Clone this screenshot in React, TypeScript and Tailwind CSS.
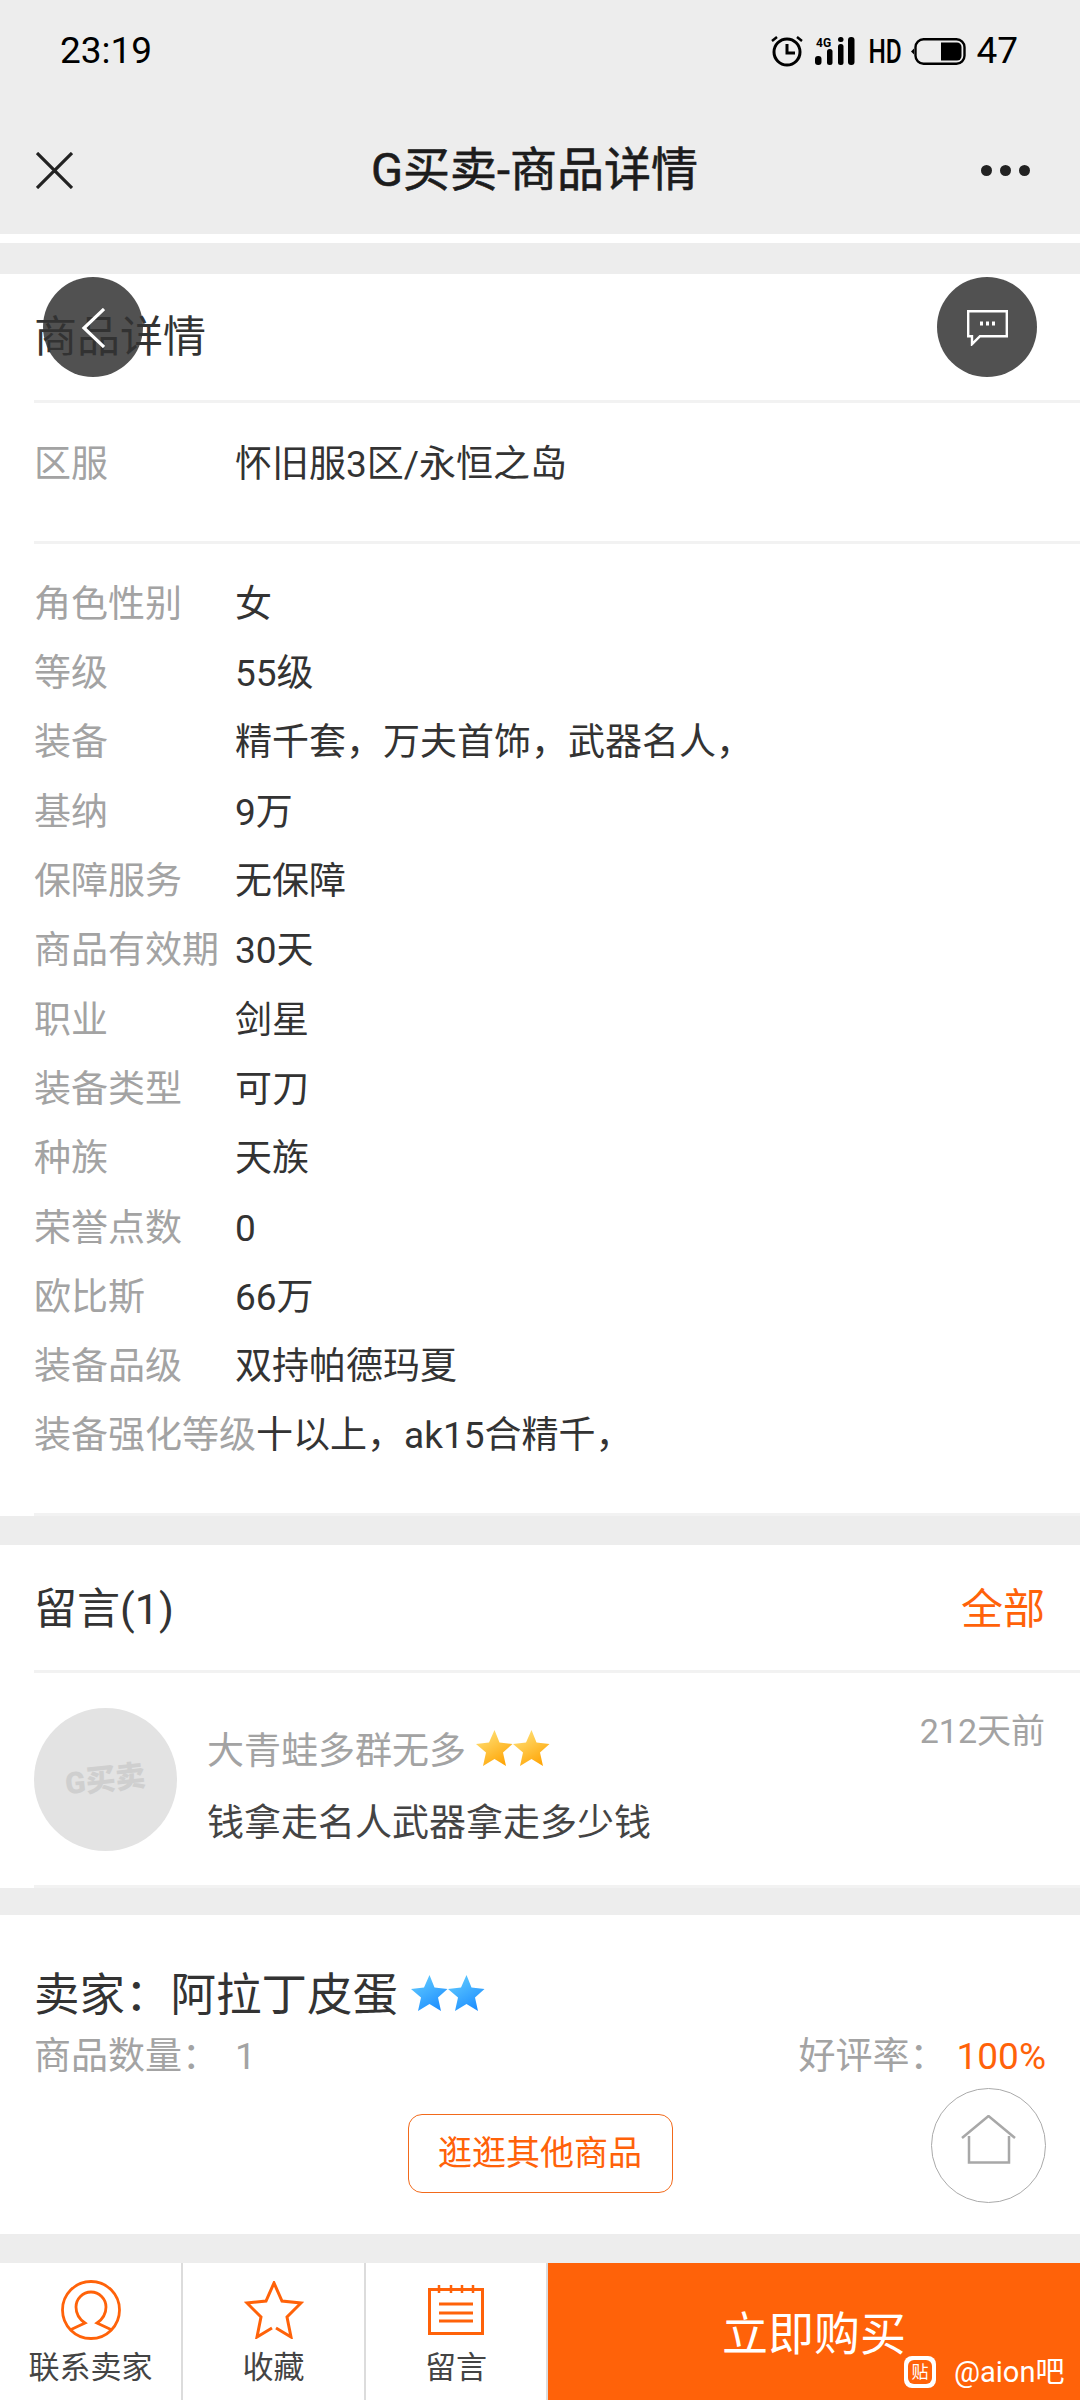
import type { ReactNode } from "react"

const FONT = "font-['Roboto','Noto_Sans_CJK_SC',sans-serif]"

const SPECS = [
  ["角色性别", "女"],
  ["等级", "55级"],
  ["装备", "精千套，万夫首饰，武器名人，"],
  ["基纳", "9万"],
  ["保障服务", "无保障"],
  ["商品有效期", "30天"],
  ["职业", "剑星"],
  ["装备类型", "可刀"],
  ["种族", "天族"],
  ["荣誉点数", "0"],
  ["欧比斯", "66万"],
  ["装备品级", "双持帕德玛夏"],
  ["装备强化等级", "十以上，ak15合精千，"],
]

function StatusBar() {
  return (
    <div className="flex h-[102px] items-center justify-between pl-[60px] pr-[62px] text-[37px] text-black">
      <span>23:19</span>
      <div className="flex items-center">
        <svg width="32" height="32" viewBox="0 0 32 32" fill="none" stroke="#000" strokeWidth="3">
          <circle cx="16" cy="17" r="13" />
          <path d="M16 9v9h8" />
          <path d="M1 6l5-4M31 6l-5-4" strokeWidth="2.5" />
        </svg>
        <svg className="ml-[12px]" width="40" height="30" viewBox="0 0 40 30" fill="#000">
          <text x="1" y="11" fontSize="12" fontWeight="700" fontFamily="Roboto">4G</text>
          <rect x="0" y="20" width="6.5" height="9" rx="3" />
          <rect x="12" y="13" width="5.5" height="16" rx="2.5" />
          <rect x="23" y="8" width="5.5" height="21" rx="2.5" />
          <rect x="23" y="1" width="5.5" height="5" rx="2.5" />
          <rect x="33" y="1" width="6.5" height="28" rx="3" />
        </svg>
        <span className="ml-[14px] flex w-[32px] justify-center">
          <span className="scale-x-[0.72] whitespace-nowrap text-[34px] font-medium leading-none">HD</span>
        </span>
        <svg className="ml-[10px]" width="55" height="27" viewBox="0 0 55 27" fill="none">
          <path d="M0 13.5l3-3v6z" fill="#000" />
          <rect x="4.5" y="1.2" width="49" height="24.6" rx="8" stroke="#000" strokeWidth="2.4" />
          <path d="M30 4.5h16a4.5 4.5 0 0 1 4.5 4.5v9a4.5 4.5 0 0 1-4.5 4.5H30z" fill="#000" />
        </svg>
        <span className="ml-[10px]">47</span>
      </div>
    </div>
  )
}

function NavBar() {
  return (
    <div className="flex h-[132px] items-center justify-between pl-[36px] pr-[50px] pt-[4px]">
      <svg width="37" height="37" viewBox="0 0 37 37" stroke="#222" strokeWidth="3.2">
        <path d="M1 1l35 35M36 1L1 36" />
      </svg>
      <span className="ml-[15px] text-[47px] text-[#1c1c1c] [-webkit-text-stroke:0.6px_#1c1c1c]">G买卖-商品详情</span>
      <div className="flex gap-[8px]">
        <i className="h-[11px] w-[11px] rounded-full bg-[#222]" />
        <i className="h-[11px] w-[11px] rounded-full bg-[#222]" />
        <i className="h-[11px] w-[11px] rounded-full bg-[#222]" />
      </div>
    </div>
  )
}

function Row({ label, value }: { label: string; value: string }) {
  return (
    <div className="flex h-[69.3px] items-center whitespace-nowrap text-[37px]">
      <span className="min-w-[201px] text-[#a3a3a3]">{label}</span>
      <span className="text-[#333]">{value}</span>
    </div>
  )
}

function Star({ from, to, id }: { from: string; to: string; id: string }) {
  return (
    <svg width="37" height="36" viewBox="0 0 37 36">
      <defs>
        <linearGradient id={id} x1="0.2" y1="0" x2="0.8" y2="1">
          <stop offset="0" stopColor={from} />
          <stop offset="1" stopColor={to} />
        </linearGradient>
      </defs>
      <path d="M18.5 0l5 12.5 13 1.5-9.5 8.5 3 13.5-11.5-7-11.5 7 3-13.5L0 14l13-1.5z" fill={`url(#${id})`} />
    </svg>
  )
}

function TabItem({ label, width, children }: { label: string; width: string; children: ReactNode }) {
  return (
    <div className={`flex flex-col items-center border-r-[2px] border-[#dcdcdc] pt-[17px] ${width}`}>
      <div className="flex h-[60px] items-center">{children}</div>
      <span className="mt-[8px] text-[31px] leading-[40px] text-[#444]">{label}</span>
    </div>
  )
}

export default function App() {
  return (
    <div className={`relative h-[2400px] w-[1080px] overflow-hidden bg-[#ededed] ${FONT}`}>
      <StatusBar />
      <NavBar />
      <div className="h-[9px] bg-white" />
      <div className="h-[31px]" />

      <section className="bg-white pl-[34px]">
        <div className="flex h-[129px] items-center border-b-[3px] border-[#f2f2f2] text-[43px] text-[#333]">
          商品详情
        </div>
        <div className="flex h-[141px] items-start border-b-[3px] border-[#f2f2f2] pt-[34px] text-[37px]">
          <span className="w-[201px] text-[#a3a3a3]">区服</span>
          <span className="text-[#333]">怀旧服3区/永恒之岛</span>
        </div>
        <div className="border-b-[3px] border-[#f2f2f2] pb-[42px] pt-[26px]">
          <div className="h-[901px]">
            {SPECS.map(([label, value]) => (
              <Row key={label} label={label} value={value} />
            ))}
          </div>
        </div>
      </section>

      <div className="h-[29px]" />

      <section className="bg-white pl-[34px]">
        <div className="flex h-[128px] items-center justify-between border-b-[3px] border-[#f2f2f2] pr-[35px] pt-[3px] text-[43px]">
          <span className="text-[#333]">留言(1)</span>
          <span className="text-[42px] text-[#ff6209]">全部</span>
        </div>
        <div className="flex h-[215px] items-start border-b-[3px] border-[#f2f2f2] pr-[35px] pt-[35px]">
          <div className="flex h-[143px] w-[143px] shrink-0 items-center justify-center rounded-full bg-[#e3e3e3]">
            <span className="-rotate-6 whitespace-nowrap text-[30px] font-black text-[#cfcfcf]">G买卖</span>
          </div>
          <div className="ml-[30px] flex-1">
            <div className="mt-[16px] flex items-center gap-[10px] text-[37px] text-[#a3a3a3]">
              大青蛙多群无多
              <span className="-mt-[8px] flex">
                <Star id="gold1" from="#ffe27a" to="#ffa200" />
                <Star id="gold2" from="#ffe27a" to="#ffa200" />
              </span>
            </div>
            <div className="mt-[16px] text-[37px] text-[#444]">钱拿走名人武器拿走多少钱</div>
          </div>
          <span className="-mt-[2px] text-[34px] text-[#a3a3a3]">212天前</span>
        </div>
      </section>

      <div className="h-[27px]" />

      <section className="h-[319px] bg-white px-[34px] pt-[51px]">
        <div className="flex items-center text-[45.5px] leading-[60px] text-[#333]">
          卖家：阿拉丁皮蛋
          <span className="-mt-[6px] ml-[13px] flex">
            <Star id="blue1" from="#62ccff" to="#1b8cff" />
            <Star id="blue2" from="#62ccff" to="#1b8cff" />
          </span>
        </div>
        <div className="flex items-center justify-between text-[37px] leading-[62px] text-[#a3a3a3]">
          <span>
            商品数量：<span className="ml-[16px]">1</span>
          </span>
          <span>
            好评率：<span className="ml-[10px] text-[#ff6209]">100%</span>
          </span>
        </div>
        <button className="mx-auto mt-[26px] flex h-[79px] w-[265px] items-center justify-center rounded-[14px] border-[1.5px] border-[#f26a1b] text-[34px] text-[#ff6209]">
          逛逛其他商品
        </button>
      </section>

      <div className="h-[29px]" />

      <div className="flex h-[137px] bg-white">
        <TabItem label="联系卖家" width="w-[183px]">
          <svg width="60" height="60" viewBox="0 0 60 60" fill="none" stroke="#ff6209" strokeWidth="2.8">
            <circle cx="30" cy="30" r="28.5" />
            <path d="M9 50l15-7c-6-4-9-10-9-16a15 15 0 0 1 30 0c0 6-3 12-9 16l15 7" />
          </svg>
        </TabItem>
        <TabItem label="收藏" width="w-[183px]">
          <svg width="60" height="58" viewBox="0 0 60 58" fill="none" stroke="#ff6209" strokeWidth="3">
            <path d="M28 47l-15 9 4-20L3 22l19-2 8-18 8 18 19 2-14 14 4 20-15-9" />
          </svg>
        </TabItem>
        <TabItem label="留言" width="w-[182px]">
          <svg width="56" height="50" viewBox="0 0 56 50" fill="none" stroke="#ff6209" strokeWidth="3">
            <rect x="1.5" y="4.5" width="53" height="44" />
            <path d="M11 0v8M23 0v8M34 0v8M45 0v8" strokeWidth="2.5" />
            <path d="M11 19h34M11 28h34M11 36h34" />
          </svg>
        </TabItem>
        <div className="flex flex-1 items-center justify-center bg-[#ff6209] pt-[6px] text-[46px] text-white">
          立即购买
        </div>
      </div>

      {/* floating controls and watermark over the page */}
      <button className="absolute left-[43px] top-[277px] flex h-[100px] w-[100px] items-center justify-center rounded-full bg-[#333]/85">
        <svg className="mt-[1px]" width="24" height="40" viewBox="0 0 24 40" fill="none" stroke="#fff" strokeWidth="3.2">
          <path d="M23 1L3 20l20 19" />
        </svg>
      </button>
      <button className="absolute left-[937px] top-[277px] flex h-[100px] w-[100px] items-center justify-center rounded-full bg-[#333]/85">
        <svg className="mt-[2px]" width="41" height="36" viewBox="0 0 41 36" fill="none" stroke="#fff" strokeWidth="2.4">
          <path d="M1.2 1.2h38.600v25H13l-8 8v-8H1.2z" />
          <path d="M13 13.5h3M19 13.5h3M25 13.5h3" strokeWidth="4" />
        </svg>
      </button>
      <button className="absolute left-[931px] top-[2088px] flex h-[115px] w-[115px] items-center justify-center rounded-full border-[1.5px] border-[#aaaaaa] bg-white/90">
        <svg className="-mt-[12px]" width="55" height="49" viewBox="0 0 55 49" fill="none" stroke="#a8a8a8" strokeWidth="2.5">
          <path d="M1 23L27.5 1 54 23" />
          <path d="M8 21v26.5h40V21" />
        </svg>
      </button>
      <div className="absolute left-[904px] top-[2352px] flex items-center gap-[18px] text-[29px] leading-[40px] text-white">
        <span className="flex h-[32px] w-[32px] items-center justify-center rounded-[8px] bg-white">
          <span className="flex h-[24px] w-[24px] items-center justify-center rounded-[6px] bg-[#ff6209] text-[17px] leading-none">
            贴
          </span>
        </span>
        <span>@aion吧</span>
      </div>
    </div>
  )
}
